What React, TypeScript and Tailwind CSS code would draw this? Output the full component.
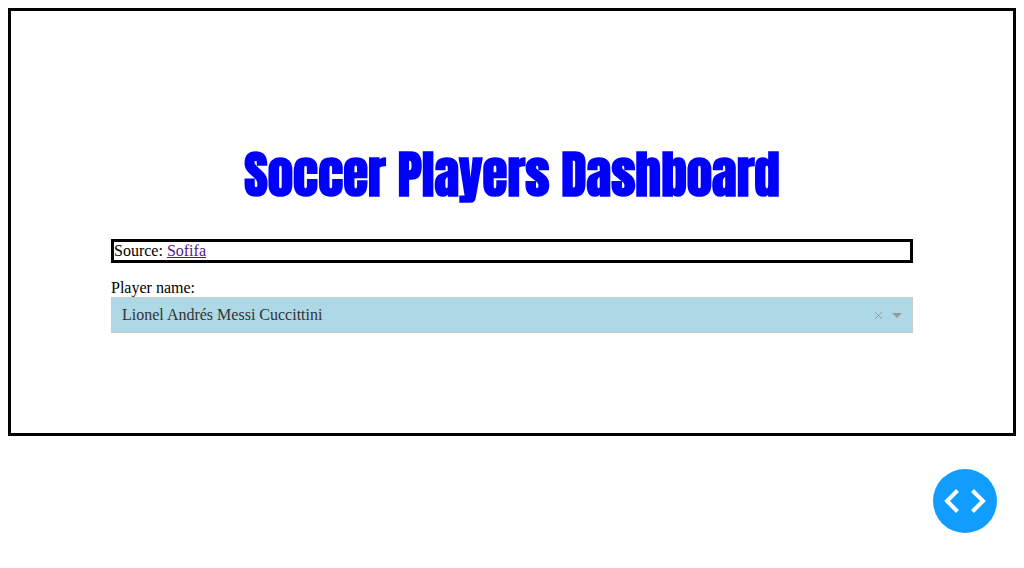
import { useState } from 'react';

const players = [
  'Lionel Andrés Messi Cuccittini',
  'Cristiano Ronaldo dos Santos Aveiro',
  'Neymar da Silva Santos Júnior',
];

function PlayerSelect() {
  const [player, setPlayer] = useState(players[0]);

  return (
    <div>
      <label htmlFor="player" className="block">
        Player name:
      </label>
      <div className="flex h-9 items-center border border-[#ccc] bg-[#add8e6] pr-[10px] text-[#333]">
        <select
          id="player"
          value={player}
          onChange={(event) => setPlayer(event.target.value)}
          className="h-full min-w-0 flex-1 appearance-none bg-transparent px-[10px] outline-none"
        >
          <option value=""></option>
          {players.map((name) => (
            <option key={name} value={name}>
              {name}
            </option>
          ))}
        </select>
        <button
          type="button"
          aria-label="Clear value"
          onClick={() => setPlayer('')}
          className="mr-2 flex h-full w-3 items-center justify-center text-[#999]"
        >
          <svg viewBox="0 0 9 9" className="mt-px size-[9px]" stroke="currentColor" strokeWidth="0.9">
            <path d="M1 1l7 7M8 1l-7 7" />
          </svg>
        </button>
        <svg viewBox="0 0 10 5" className="h-[5px] w-[10px] fill-[#999]" aria-hidden="true">
          <path d="M0 0h10L5 5z" />
        </svg>
      </div>
    </div>
  );
}

export default function App() {
  return (
    <div className="p-2 font-['Liberation_Serif',serif] text-base leading-[18px] text-black">
      <main className="border-[3px] border-black p-[100px]">
        <h1 className="py-8 text-center font-['Impact','Anton','Roboto_Condensed',sans-serif] text-[51px] leading-[64px] font-bold text-[#00f]">
          Soccer Players Dashboard
        </h1>
        <div className="mb-4 border-[3px] border-black">
          Source:{' '}
          <a href="https://sofifa.com" className="text-[#551a8b] underline">
            Sofifa
          </a>
        </div>
        <PlayerSelect />
      </main>
      <button
        type="button"
        aria-label="Toggle debug menu"
        className="fixed right-[27px] bottom-[35px] flex size-16 items-center justify-center rounded-full bg-[#119dff]"
      >
        <svg viewBox="0 0 42 24" className="h-6 w-[42px]" fill="none" stroke="#fff" strokeWidth="4">
          <path d="M13.500 1.500L3 12L13.500 22.500M28.500 1.500L39 12L28.500 22.500" />
        </svg>
      </button>
    </div>
  );
}
